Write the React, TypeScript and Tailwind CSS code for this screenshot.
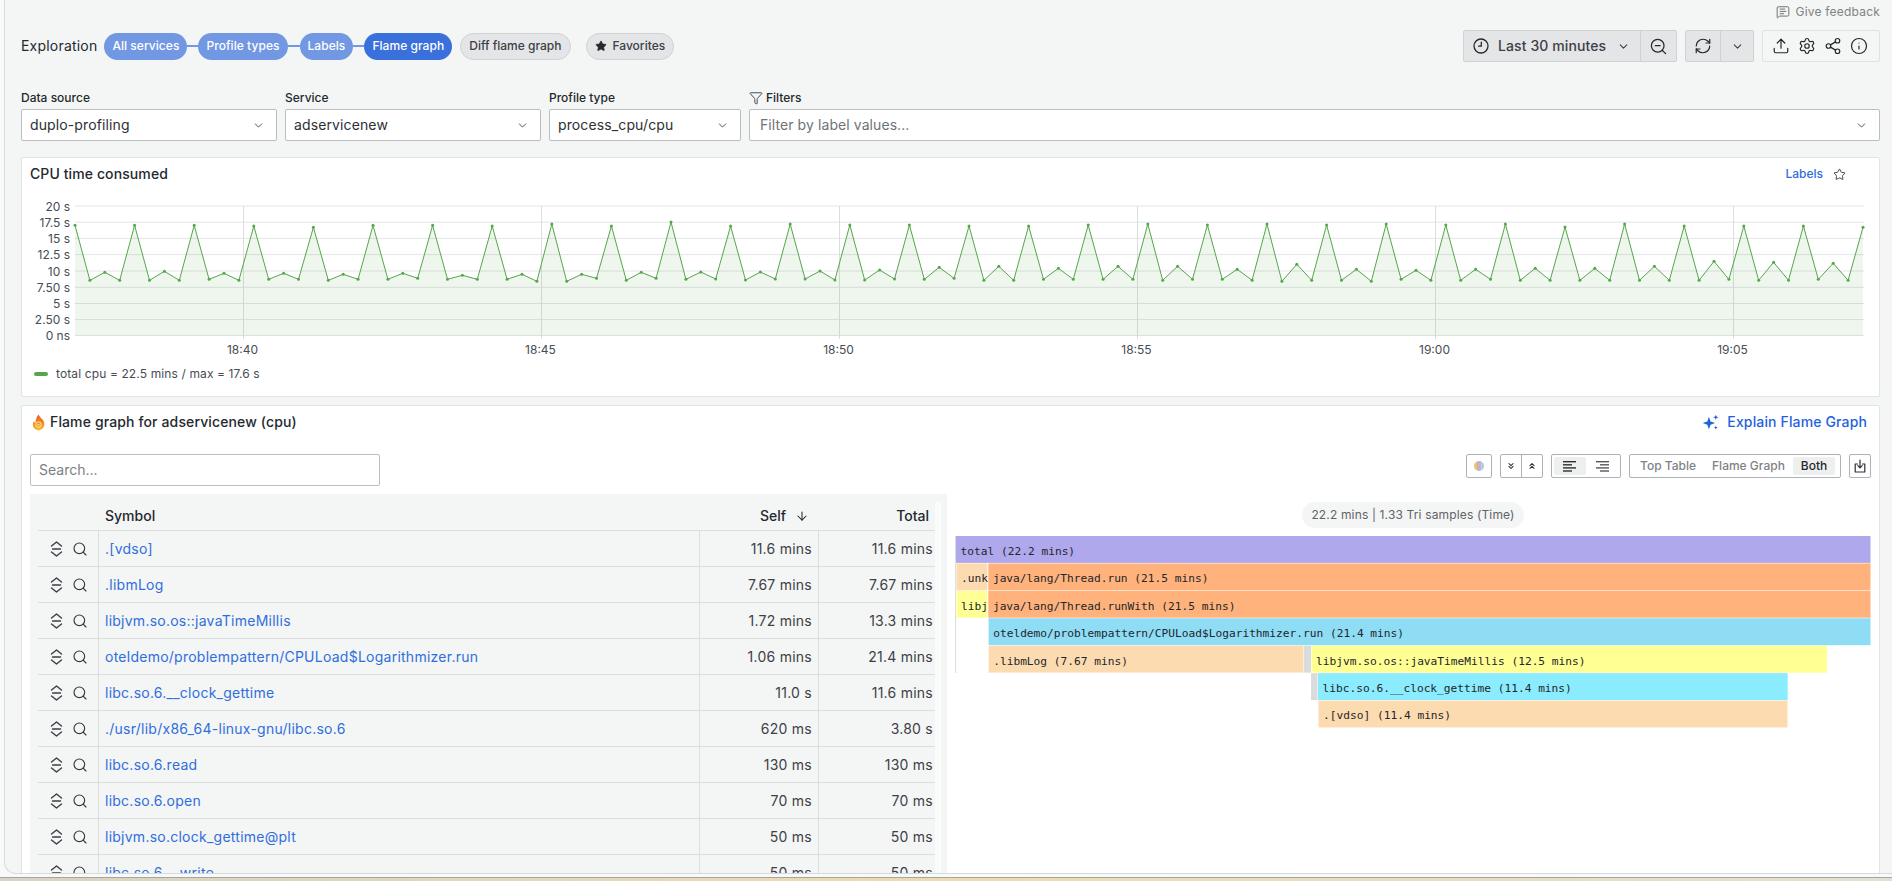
import {
  ArrowDown,
  ChevronDown,
  ChevronsDown,
  ChevronsUp,
  Funnel,
  Info,
  MessageSquareText,
  RefreshCw,
  Search,
  Settings,
  Share2,
  Star,
  Upload,
  ZoomOut,
} from "lucide-react";

// peak, low, mid, low for each minute, in page pixels
const periods = [
  [225.3, 280.3, 272.3, 280.3],
  [225.3, 280.3, 271.3, 280.3],
  [225.3, 279.3, 273.3, 280.3],
  [226, 279.3, 273.3, 279.3],
  [227.3, 280.3, 274.3, 279.3],
  [225.3, 279.3, 273.3, 278.3],
  [225.3, 279.3, 275.3, 279.3],
  [226, 279.3, 274.3, 281.3],
  [224, 281.3, 274.3, 278.3],
  [226, 280.3, 272.3, 278.3],
  [222, 279.3, 272, 279],
  [226, 280, 272, 279],
  [224, 279, 271, 280],
  [225, 280, 270, 279],
  [225, 279.3, 267.3, 278.3],
  [226, 280.3, 266.3, 280.3],
  [226, 279.3, 268.3, 279.3],
  [225, 279.3, 266.3, 279.3],
  [224, 280.3, 266.3, 279.3],
  [225, 279.3, 269.3, 280.3],
  [224, 281.3, 264.3, 280.3],
  [225, 280.3, 269.3, 281.3],
  [224, 279.3, 270.3, 280.3],
  [225, 280.3, 269.3, 279.3],
  [224, 280.3, 268.3, 280.3],
  [227, 280.3, 268.3, 280.3],
  [224, 280.3, 266.3, 280.3],
  [226, 280.3, 261.3, 279.3],
  [226, 280.3, 262.3, 280.3],
  [226, 279.3, 263.3, 280.3],
  [227.3],
];

const points = periods.flat().map((y, i) => ({ x: 75 + i * 14.9, y }));
const linePath = points.map((p) => `${p.x},${p.y}`).join(" ");
const areaPath = `75,335.5 ${linePath} 1863,335.5`;

const yTicks = [
  { label: "20 s", y: 206 },
  { label: "17.5 s", y: 222.2 },
  { label: "15 s", y: 238.4 },
  { label: "12.5 s", y: 254.6 },
  { label: "10 s", y: 271 },
  { label: "7.50 s", y: 287.3 },
  { label: "5 s", y: 303.5 },
  { label: "2.50 s", y: 319.6 },
  { label: "0 ns", y: 335.5 },
];

const xTicks = [
  { label: "18:40", x: 243.5 },
  { label: "18:45", x: 541.5 },
  { label: "18:50", x: 839.5 },
  { label: "18:55", x: 1137.5 },
  { label: "19:00", x: 1435.5 },
  { label: "19:05", x: 1733.5 },
];

const rowY = (r: number) => 536 + r * 27.43;

const frames = [
  { r: 0, x: 956, x2: 1870.5, color: "#b0a8ec", text: "total (22.2 mins)" },
  { r: 1, x: 956.5, x2: 987.3, color: "#fddbb0", text: ".unk" },
  { r: 1, x: 988.3, x2: 1870.5, color: "#ffb27b", text: "java/lang/Thread.run (21.5 mins)" },
  { r: 2, x: 956.5, x2: 987.3, color: "#feff95", text: "libj" },
  { r: 2, x: 988.3, x2: 1870.5, color: "#ffb27b", text: "java/lang/Thread.runWith (21.5 mins)" },
  { r: 3, x: 988.6, x2: 1870.5, color: "#8fdcf5", text: "oteldemo/problempattern/CPULoad$Logarithmizer.run (21.4 mins)" },
  { r: 4, x: 988.6, x2: 1303.5, color: "#fddbb0", text: ".libmLog (7.67 mins)" },
  { r: 4, x: 1304, x2: 1311, color: "#d9dcdc", text: "" },
  { r: 4, x: 1311.5, x2: 1827, color: "#ffff93", text: "libjvm.so.os::javaTimeMillis (12.5 mins)" },
  { r: 5, x: 1311, x2: 1317.5, color: "#d9dcdc", text: "" },
  { r: 5, x: 1318, x2: 1787.7, color: "#8becff", text: "libc.so.6.__clock_gettime (11.4 mins)" },
  { r: 6, x: 1318.5, x2: 1787.5, color: "#fddbb0", text: ".[vdso] (11.4 mins)" },
];

const tableRows = [
  { symbol: ".[vdso]", self: "11.6 mins", total: "11.6 mins" },
  { symbol: ".libmLog", self: "7.67 mins", total: "7.67 mins" },
  { symbol: "libjvm.so.os::javaTimeMillis", self: "1.72 mins", total: "13.3 mins" },
  { symbol: "oteldemo/problempattern/CPULoad$Logarithmizer.run", self: "1.06 mins", total: "21.4 mins" },
  { symbol: "libc.so.6.__clock_gettime", self: "11.0 s", total: "11.6 mins" },
  { symbol: "./usr/lib/x86_64-linux-gnu/libc.so.6", self: "620 ms", total: "3.80 s" },
  { symbol: "libc.so.6.read", self: "130 ms", total: "130 ms" },
  { symbol: "libc.so.6.open", self: "70 ms", total: "70 ms" },
  { symbol: "libjvm.so.clock_gettime@plt", self: "50 ms", total: "50 ms" },
  { symbol: "libc.so.6.__write", self: "50 ms", total: "50 ms" },
];

function Select({ value, width }: { value: string; width: string }) {
  return (
    <div className={`${width} h-8 bg-white border border-[#bcbdbf] rounded-[2px] flex items-center justify-between pl-2 pr-[11px] text-sm tracking-[0.12px] text-[#2c3036]`}>
      <span>{value}</span>
      <ChevronDown size={13} strokeWidth={1.8} className="text-[#4c5056]" />
    </div>
  );
}

function Field({ label, value, width }: { label: string; value: string; width: string }) {
  return (
    <div className={width}>
      <div className="h-4 mb-[3px] text-xs font-medium leading-4 text-[#24292e]">{label}</div>
      <Select value={value} width="w-full" />
    </div>
  );
}

function Pill({ label, active }: { label: string; active?: boolean }) {
  return (
    <div className={`h-[27px] px-2 rounded-full flex items-center text-xs font-medium tracking-[0.05px] text-white ${active ? "bg-[#3a70db]" : "bg-[#7297e3]"}`}>
      {label}
    </div>
  );
}

function Connector({ w }: { w: string }) {
  return <div className={`${w} h-[2px] bg-[#7297e3]`} />;
}

function ClockIcon() {
  return (
    <svg width="16" height="16" viewBox="0 0 16 16" fill="none" stroke="#24292e" strokeWidth="1.3" strokeLinecap="round">
      <circle cx="8" cy="8" r="7" />
      <path d="M8.3 4.2V8.2H5.6" />
    </svg>
  );
}

function UnfoldIcon() {
  return (
    <svg width="13" height="16" viewBox="0 0 13 16" fill="none" stroke="#3a3e44" strokeWidth="1.4" strokeLinecap="round" strokeLinejoin="round">
      <path d="M1.5 5 6.5 1l5 4" />
      <path d="M2.6 8h7.8" strokeWidth="1.6" />
      <path d="M1.5 11l5 4 5-4" />
    </svg>
  );
}

function SparklesIcon() {
  return (
    <svg width="17" height="17" viewBox="0 0 16 16" fill="#1f62e0">
      <path d="M6.5 2.6 8 7l4.3 1.5L8 10 6.5 14.4 5 10 .7 8.5 5 7z" />
      <path d="M13 .6l.7 1.8 1.8.7-1.8.7-.7 1.8-.7-1.8-1.8-.7 1.8-.7z" />
      <path d="M13 11l.5 1.3 1.3.5-1.3.5-.5 1.3-.5-1.3-1.3-.5 1.3-.5z" />
    </svg>
  );
}

function FlameIcon() {
  return (
    <svg width="13" height="17" viewBox="0 0 13 17">
      <defs>
        <linearGradient id="flameFill" x1="0" y1="0" x2="0" y2="1">
          <stop offset="0" stopColor="#ee5a24" />
          <stop offset="0.5" stopColor="#f28a1c" />
          <stop offset="1" stopColor="#f9c22e" />
        </linearGradient>
      </defs>
      <path d="M6.6.4c.6 2.4 3 3.4 4.6 5.8 1.5 2.4 1.6 5.2.2 7.4-1.1 1.8-2.9 2.8-4.9 2.8s-3.8-1-4.9-2.8C.5 11.6.5 9.2 1.9 7.2c.4 1 1 1.6 1.7 1.9C3.3 6 4.6 2.6 6.6.4z" fill="url(#flameFill)" />
      <circle cx="6.5" cy="10.6" r="2.7" fill="none" stroke="#fde7b0" strokeWidth="1" />
      <circle cx="6.5" cy="10.6" r="0.9" fill="#fde7b0" />
    </svg>
  );
}

function ColorIcon() {
  return (
    <svg width="10" height="10" viewBox="0 0 10 10">
      <defs>
        <clipPath id="colorDot">
          <circle cx="5" cy="5" r="5" />
        </clipPath>
      </defs>
      <g clipPath="url(#colorDot)">
        <rect x="0" width="3" height="10" fill="#e8c468" />
        <rect x="3" width="2" height="10" fill="#e3a6b8" />
        <rect x="5" width="2.5" height="10" fill="#9cc0ea" />
        <rect x="7.5" width="2.5" height="10" fill="#bfc2c6" />
      </g>
    </svg>
  );
}

function AlignIcon({ right }: { right?: boolean }) {
  const widths = [13, 9, 13, 9];
  return (
    <svg width="14" height="11" viewBox="0 0 14 11" fill={right ? "#55595f" : "#2c3036"}>
      {widths.map((w, i) => (
        <rect key={i} x={right ? 14 - w : 0} y={i * 3.1} width={w} height="1.4" />
      ))}
    </svg>
  );
}

function ExportIcon() {
  return (
    <svg width="12" height="14" viewBox="0 0 12 14" fill="none" stroke="#2c3036" strokeWidth="1.2" strokeLinecap="round" strokeLinejoin="round">
      <path d="M3.5 5H1.2v8h9.6V5H8.5" />
      <path d="M6 1v7.5M3.8 6.6 6 8.8l2.2-2.2" />
    </svg>
  );
}

function TableRow({ symbol, self, total }: { symbol: string; self: string; total: string }) {
  return (
    <div className="h-9 flex border-b border-[#dcdddd] text-sm tracking-[0.25px]">
      <div className="w-[61px] shrink-0 flex items-center pl-[12px] gap-[9px] border-r border-[#dcdddd]">
        <UnfoldIcon />
        <Search size={16} strokeWidth={1.7} className="text-[#33373d]" />
      </div>
      <div className="flex-1 flex items-center pl-[6px] text-[#2f6fdc] whitespace-nowrap">{symbol}</div>
      <div className="w-[120px] shrink-0 flex items-center justify-end pr-[6px] border-x border-[#dcdddd] text-[#3d4147]">{self}</div>
      <div className="w-[116px] shrink-0 flex items-center justify-end pr-[2px] text-[#3d4147]">{total}</div>
    </div>
  );
}

export default function App() {
  return (
    <div className="h-[881px] w-full overflow-hidden bg-[#f8f9f9] font-[family-name:Inter,sans-serif] text-[#24292e]">
      <div className="ml-1 h-[874px] overflow-hidden rounded-bl-[12px] border-b border-l border-[#d8d9da] bg-[#f4f5f5] pl-4 pr-3 pt-1">
        <div className="h-4 flex items-center justify-end gap-[6px] text-xs tracking-[0.2px] text-[#7f8286]">
          <MessageSquareText size={14} strokeWidth={1.6} className="text-[#65696e]" />
          Give feedback
        </div>

        <div className="mt-[10px] h-8 flex items-center justify-between">
          <div className="flex items-center">
            <span className="mr-[7px] text-sm tracking-[0.2px]">Exploration</span>
            <Pill label="All services" />
            <Connector w="w-[11px]" />
            <Pill label="Profile types" />
            <Connector w="w-[12px]" />
            <Pill label="Labels" />
            <Connector w="w-[11px]" />
            <Pill label="Flame graph" active />
            <div className="ml-2 h-[27px] px-2 rounded-full flex items-center text-xs font-medium bg-[#e4e5e6] border border-[#d0d1d3] text-[#3c4046]">
              Diff flame graph
            </div>
            <div className="ml-[15px] h-[27px] px-2 rounded-full flex items-center gap-[6px] text-xs font-medium bg-[#e4e5e6] border border-[#d0d1d3] text-[#3c4046]">
              <Star size={12} fill="#24292e" strokeWidth={1.5} className="text-[#24292e]" />
              Favorites
            </div>
          </div>
          <div className="flex items-center gap-2">
            <div className="h-8 w-[214px] flex items-center rounded-[2px] border border-[#d0d1d3] bg-[#e4e5e6] text-sm font-medium text-[#3c4046]">
              <div className="flex-1 flex items-center pl-[9px] pr-[10px]">
                <ClockIcon />
                <span className="ml-[9px] tracking-[0.1px]">Last 30 minutes</span>
                <ChevronDown size={13} strokeWidth={2} className="ml-auto" />
              </div>
              <div className="w-[36px] h-full flex items-center justify-center border-l border-[#d0d1d3]">
                <ZoomOut size={19} strokeWidth={1.6} className="text-[#24292e]" />
              </div>
            </div>
            <div className="h-8 w-[69px] flex items-center rounded-[2px] border border-[#d0d1d3] bg-[#e4e5e6]">
              <div className="w-[35px] h-full flex items-center justify-center border-r border-[#d0d1d3]">
                <RefreshCw size={18} strokeWidth={1.6} className="text-[#24292e]" />
              </div>
              <div className="flex-1 flex items-center justify-center">
                <ChevronDown size={13} strokeWidth={2} className="text-[#3c4046]" />
              </div>
            </div>
            <div className="h-8 w-[118px] flex items-center justify-center gap-2 rounded-[2px] border border-[#e0e1e2] pr-[2px] text-[#24292e]">
              <Upload size={18} strokeWidth={1.6} />
              <Settings size={18} strokeWidth={1.6} />
              <Share2 size={18} strokeWidth={1.6} />
              <Info size={18} strokeWidth={1.6} />
            </div>
          </div>
        </div>

        <div className="mt-[28px] flex gap-2">
          <Field label="Data source" value="duplo-profiling" width="w-[256px]" />
          <Field label="Service" value="adservicenew" width="w-[256px]" />
          <Field label="Profile type" value="process_cpu/cpu" width="w-[192px]" />
          <div className="flex-1">
            <div className="h-4 mb-[3px] flex items-center gap-[3px] text-xs font-medium">
              <Funnel size={14} strokeWidth={1.4} />
              Filters
            </div>
            <div className="h-8 bg-white border border-[#bcbdbf] rounded-[2px] flex items-center justify-between pl-[10px] pr-[11px] text-sm tracking-[0.08px] text-[#6f7378]">
              <span>Filter by label values...</span>
              <ChevronDown size={13} strokeWidth={1.8} className="text-[#4c5056]" />
            </div>
          </div>
        </div>

        <div className="mt-4 h-[240px] bg-white border border-[#e2e3e4] rounded-[2px]">
          <div className="h-8 flex items-center justify-between pl-2 pr-[33px]">
            <span className="text-sm font-medium tracking-[0.1px]">CPU time consumed</span>
            <div className="flex items-center gap-[10px]">
              <span className="text-xs font-medium text-[#2f6fdc]">Labels</span>
              <Star size={13} strokeWidth={1.6} />
            </div>
          </div>
          <svg className="mt-[5px] block" width="1857" height="165" viewBox="22 195 1857 165">
            {yTicks.map((t) => (
              <g key={t.label}>
                <line x1="75" x2="1864" y1={t.y} y2={t.y} stroke="#e4e5e6" />
                <text x="70" y={t.y + 4.5} textAnchor="end" fontSize="12" fill="#464c54">{t.label}</text>
              </g>
            ))}
            {xTicks.map((t) => (
              <g key={t.label}>
                <line x1={t.x} x2={t.x} y1="206" y2="339" stroke="#dcdedd" />
                <text x={t.x - 1} y="354" textAnchor="middle" fontSize="12" fill="#464c54">{t.label}</text>
              </g>
            ))}
            <polygon points={areaPath} fill="#56a64b" fillOpacity="0.1" />
            <polyline points={linePath} fill="none" stroke="#56a64b" strokeWidth="1" />
            {points.map((p) => (
              <circle key={p.x} cx={p.x} cy={p.y} r="1.5" fill="#56a64b" />
            ))}
          </svg>
          <div className="h-7 flex items-center pl-3 text-xs tracking-[0.12px] text-[#464c54]">
            <div className="w-[14px] h-1 rounded-full bg-[#56a64b] mr-2" />
            total cpu = 22.5 mins / max = 17.6 s
          </div>
        </div>

        <div className="mt-2 h-[600px] bg-white border border-[#e2e3e4] rounded-[2px]">
          <div className="h-8 flex items-center justify-between pl-[10px] pr-[12px]">
            <div className="flex items-center gap-[5px] text-sm font-medium tracking-[0.13px]">
              <FlameIcon />
              Flame graph for adservicenew (cpu)
            </div>
            <div className="flex items-center gap-[8px] text-sm font-medium tracking-[0.14px] text-[#1f62e0]">
              <SparklesIcon />
              Explain Flame Graph
            </div>
          </div>

          <div className="mt-4 h-8 flex justify-between pl-2 pr-2">
            <div className="w-[350px] h-8 border border-[#bcbdbf] rounded-[2px] flex items-center pl-2 text-sm text-[#7b7f85]">Search...</div>
            <div className="h-6 flex gap-2 text-xs font-medium">
              <div className="w-[26px] flex items-center justify-center border border-[#b0b1b4] rounded-[2px]">
                <ColorIcon />
              </div>
              <div className="w-[43px] flex border border-[#b0b1b4] rounded-[2px]">
                <div className="flex-1 flex items-center justify-center border-r border-[#b0b1b4]">
                  <ChevronsDown size={10} strokeWidth={2.5} />
                </div>
                <div className="flex-1 flex items-center justify-center">
                  <ChevronsUp size={10} strokeWidth={2.5} />
                </div>
              </div>
              <div className="w-[70px] flex items-center p-[2px] border border-[#b0b1b4] rounded-[2px]">
                <div className="w-8 h-[18px] flex items-center justify-center bg-[#eeefef] rounded-[2px]">
                  <AlignIcon />
                </div>
                <div className="w-8 h-[18px] flex items-center justify-center">
                  <AlignIcon right />
                </div>
              </div>
              <div className="w-[212px] flex items-center p-[2px] border border-[#b0b1b4] rounded-[2px] text-[#7f8286]">
                <div className="px-2">Top Table</div>
                <div className="px-2">Flame Graph</div>
                <div className="h-[18px] px-2 flex items-center bg-[#eeefef] rounded-[2px] text-[#24292e]">Both</div>
              </div>
              <div className="w-[22px] flex items-center justify-center border border-[#b0b1b4] rounded-[2px]">
                <ExportIcon />
              </div>
            </div>
          </div>

          <div className="mt-2 ml-2 flex">
            <div className="w-[917px] h-[500px] flex bg-[#f4f5f5] pl-2">
              <div className="w-[897px]">
                <div className="h-[37px] pt-2 flex border-b border-[#dcdddd] text-sm font-medium">
                  <div className="flex-1 flex items-center pl-[67px]">Symbol</div>
                  <div className="w-[120px] flex items-center justify-end gap-[9px] pr-[10px]">
                    Self
                    <ArrowDown size={14} strokeWidth={1.8} />
                  </div>
                  <div className="w-[116px] flex items-center justify-end pr-[6px]">Total</div>
                </div>
                {tableRows.map((row) => (
                  <TableRow key={row.symbol} {...row} />
                ))}
              </div>
              <div className="mt-2 w-[6px] bg-[#fafbfb]" />
            </div>

            <div className="ml-2 w-[916px]">
              <div className="mt-2 flex justify-center">
                <div className="h-[26px] px-[9px] flex items-center rounded-full bg-[#f4f5f5] text-xs tracking-[0.15px] text-[#5f6368]">
                  22.2 mins | 1.33 Tri samples (Time)
                </div>
              </div>
              <svg className="mt-2 block" width="916" height="195" viewBox="955 536 916 195">
                <line x1="955.6" x2="955.6" y1="536" y2="673" stroke="#d9dcdc" />
                {frames.map((f) => (
                  <g key={`${f.r}-${f.x}`}>
                    <rect x={f.x} y={rowY(f.r)} width={f.x2 - f.x} height="26.9" fill={f.color} />
                    {f.text && (
                      <text
                        x={f.x + 4.6}
                        y={rowY(f.r) + 18.8}
                        fontSize="11.2"
                        fill="#22262b"
                        className="font-[family-name:'DejaVu_Sans_Mono',monospace]"
                      >
                        {f.text}
                      </text>
                    )}
                  </g>
                ))}
              </svg>
            </div>
          </div>
        </div>
      </div>
      <div className="h-[3px]" />
      <div className="h-[4px] border-t border-[#a5a5a5] bg-gradient-to-r from-[#d8d4c4] via-[#ecdcae] to-[#e4e0d0]" />
    </div>
  );
}
